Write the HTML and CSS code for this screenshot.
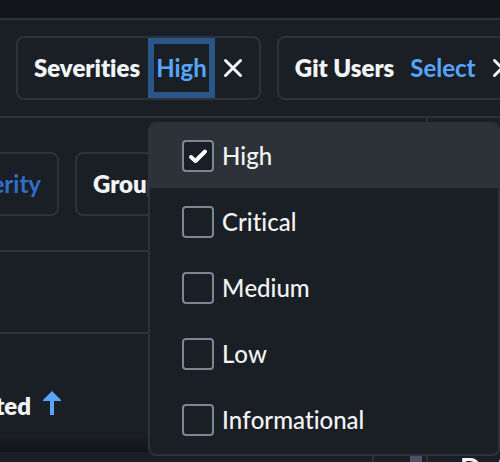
FILE: index.html
```html
<!DOCTYPE html>
<html lang="en">
<head>
<meta charset="utf-8">
<meta name="viewport" content="width=device-width, initial-scale=1">
<title>Findings</title>
<link rel="stylesheet" href="styles.css">
</head>
<body>
<div class="app">
  <header class="topbar"></header>
  <section class="filters" aria-label="Filters">
    <div class="chip">
      <span class="chip-label">Severities</span>
      <button class="chip-value open" type="button" aria-expanded="true">High</button>
      <button class="clear" type="button" aria-label="Clear severities"><svg viewBox="0 0 20 20" width="20" height="20"><path d="M2.500 2.500 17.500 17.500M17.500 2.500 2.500 17.500"/></svg></button>
      <div class="menu">
        <label class="option selected"><input type="checkbox" checked><span>High</span></label>
        <label class="option"><input type="checkbox"><span>Critical</span></label>
        <label class="option"><input type="checkbox"><span>Medium</span></label>
        <label class="option"><input type="checkbox"><span>Low</span></label>
        <label class="option"><input type="checkbox"><span>Informational</span></label>
      </div>
    </div>
    <div class="chip">
      <span class="chip-label">Git Users</span>
      <button class="chip-value" type="button">Select</button>
      <button class="clear" type="button" aria-label="Clear git users"><svg viewBox="0 0 20 20" width="20" height="20"><path d="M2.500 2.500 17.500 17.500M17.500 2.500 2.500 17.500"/></svg></button>
    </div>
  </section>
  <main class="content">
    <section class="list">
      <div class="sorting">
        <div class="cut">
          <div class="chip"><button class="chip-value dim" type="button">Severity</button></div>
        </div>
        <div class="chip"><span class="chip-label">Group By</span></div>
      </div>
      <div class="band"></div>
      <div class="heading">
        <div class="cut">
          <button class="sort" type="button">Detected<svg viewBox="0 0 18 24" width="18" height="24"><path d="M9 0 18 9V10H11V24H7V10H0V9Z"/></svg></button>
        </div>
      </div>
      <div class="rows"><span class="cell"></span><span class="thumb"></span></div>
    </section>
    <aside class="details"><h2>Details</h2></aside>
  </main>
</div>
</body>
</html>
```
FILE: styles.css
```css
:root {
  --bg: #1a1e25;
  --line: #2d3138;
  --text: #f3f4f5;
  --blue: #58a6ff;
}

* { box-sizing: border-box; }

body {
  margin: 0;
  overflow: hidden;
  background: var(--bg);
  color: var(--text);
  font: 24px/32px Lato, "Liberation Sans", sans-serif;
}

button {
  padding: 0;
  border: 0;
  background: none;
  color: inherit;
  font: inherit;
}

.app {
  display: flex;
  flex-direction: column;
  height: 100vh;
  overflow: hidden;
}

.topbar {
  flex: none;
  height: 20px;
  background: #121519;
  border-bottom: 2px solid var(--line);
}

.filters {
  display: flex;
  flex: none;
  gap: 16px;
  padding: 16px;
  border-bottom: 2px solid var(--line);
}

.chip {
  position: relative;
  display: flex;
  flex: none;
  align-items: center;
  height: 64px;
  padding: 0 16px;
  border: 2px solid var(--line);
  border-radius: 8px;
  white-space: nowrap;
}

.chip-label {
  font-weight: 800;
  font-variant-ligatures: none;
}

.chip-value {
  height: 60px;
  margin-left: 8px;
  padding: 0 8px;
  color: var(--blue);
  font-weight: 700;
}

.chip-value.open {
  box-shadow: inset 0 0 0 6px #2b5788;
}

.chip-value.dim {
  margin: 0;
  padding: 0;
  color: #2f6fca;
}

.clear {
  display: flex;
  margin-left: 8px;
}

.clear svg {
  fill: none;
  stroke: var(--text);
  stroke-width: 3;
  stroke-linecap: round;
}

.menu {
  position: absolute;
  z-index: 2;
  top: 84px;
  left: 130px;
  display: flex;
  flex-direction: column;
  gap: 2px;
  width: 352px;
  padding-bottom: 2px;
  overflow: hidden;
  background: var(--bg);
  border: 2px solid var(--line);
  border-radius: 8px;
}

.option {
  display: flex;
  align-items: center;
  gap: 8px;
  height: 64px;
  padding: 0 32px;
  font-weight: 500;
  font-kerning: none;
  font-variant-ligatures: none;
}

.option.selected { background: var(--line); }

.option input {
  appearance: none;
  width: 32px;
  height: 32px;
  margin: 0;
  background: var(--bg);
  border: 2px solid #7b8794;
  border-radius: 4px;
}

.option input:checked {
  background: var(--bg) url("data:image/svg+xml,%3Csvg xmlns='http://www.w3.org/2000/svg' viewBox='0 0 28 28'%3E%3Cpath d='M7 15 11.500 19 21 9.500' fill='none' stroke='white' stroke-width='4' stroke-linecap='round' stroke-linejoin='round'/%3E%3C/svg%3E") center / 28px no-repeat;
}

.content {
  display: flex;
  flex: 1;
  min-height: 0;
}

.list {
  flex: none;
  width: 428px;
  border-right: 2px solid var(--line);
}

.sorting {
  display: flex;
  gap: 16px;
  padding: 34px 0;
  border-bottom: 2px solid var(--line);
}

.cut {
  display: flex;
  justify-content: flex-end;
  width: 59px;
  overflow: hidden;
}

.band {
  height: 82px;
  border-bottom: 2px solid var(--line);
}

.heading {
  display: flex;
  align-items: center;
  height: 118px;
  padding: 26px 0 0;
  background: linear-gradient(transparent 102px, #121519);
}

.heading .cut {
  width: 61px;
}

.sort {
  display: flex;
  flex: none;
  gap: 12px;
  font-weight: 800;
}

.sort svg {
  margin-top: 1px;
  fill: var(--blue);
}

.rows {
  display: flex;
  gap: 36px;
  height: 12px;
}

.cell {
  width: 374px;
  border-right: 2px solid var(--line);
}

.thumb {
  width: 12px;
  background: #4b5263;
}

.details {
  flex: 1;
  min-width: 0;
  padding: 334px 0 0 32px;
  overflow: hidden;
}

.details h2 {
  margin: 0;
  font-size: 28px;
  line-height: 32px;
}
```
